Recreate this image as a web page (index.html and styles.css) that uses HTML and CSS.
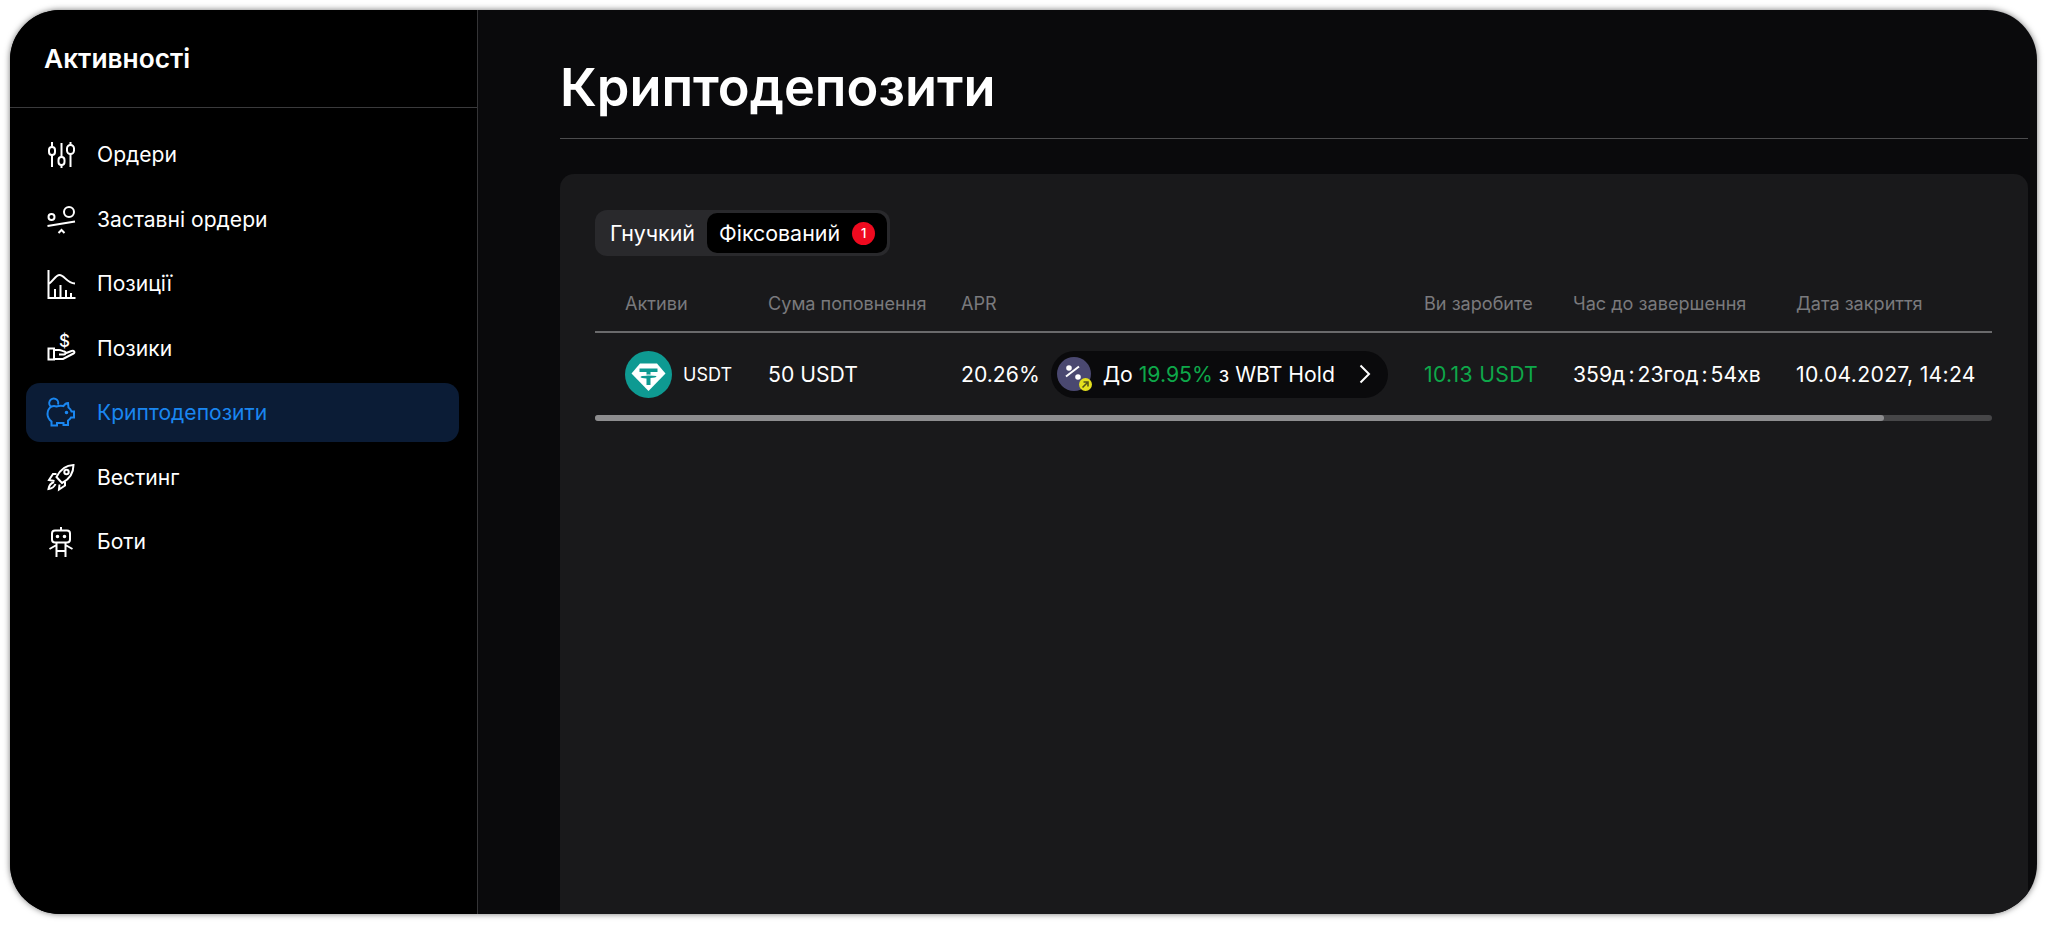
FILE: index.html
```html
<!DOCTYPE html>
<html lang="uk">
<head>
  <meta charset="UTF-8" />
  <meta name="viewport" content="width=device-width, initial-scale=1.0" />
  <title>Криптодепозити</title>
  <link rel="stylesheet" href="styles.css">
</head>
<body>
  <div class="window">
    <aside class="sidebar">
      <div class="sidebar-title">Активності</div>
      <nav class="nav">
        <a class="nav-item">
          <svg class="nav-icon" viewBox="0 0 30 30"><path d="M6 2v25M15.500 3v25M24.500 2v25"/><rect x="3" y="7" width="6" height="8" rx="3" class="mask"/><rect x="12.500" y="17" width="6" height="8" rx="3" class="mask"/><rect x="21" y="5" width="7" height="9" rx="3.500" class="mask"/></svg>
          Ордери
        </a>
        <a class="nav-item">
          <svg class="nav-icon" viewBox="0 0 30 30"><circle cx="5.500" cy="13" r="3"/><circle cx="23" cy="8" r="5"/><path d="M1.500 22 29 17.500M12.500 29l3-3 3 3"/></svg>
          Заставні ордери
        </a>
        <a class="nav-item">
          <svg class="nav-icon" viewBox="0 0 30 30"><path d="M2.500 1v28H29.500M2.500 15c4-2 7-9 11-9 5 0 7 8 15.500 8.500M9 29v-9M14.500 29V16M20 29v-8M25 29v-5"/></svg>
          Позиції
        </a>
        <a class="nav-item">
          <svg class="nav-icon" viewBox="0 0 30 30"><text x="18.500" y="14" class="icon-dollar">$</text><path d="M2.500 15.500H8v11H2.500zM8 17h5c2 0 3.500 1 5.500 1.500 1.500.5 1.500 3-.5 3h-5M19 20.500l6.500-2.500c2.500-1 4 1.500 2 2.500L17 26H8"/></svg>
          Позики
        </a>
        <a class="nav-item active">
          <svg class="nav-icon" viewBox="0 0 30 30"><path d="M5.500 9A4.500 4.500 0 1 1 12 6.500"/><path d="M10.500 8.500c2-.8 5-1 7-.5 1-1.500 3-3 4.500-3l.5 4.500c1.500 1 2.500 2.500 3 4h2.500v6H25c-.8 1.300-1.800 2.300-3 3v4.500h-4.500V25h-6.500v2.500H5.500v-4C3 21.500 1.500 19 1.500 16s1.500-6 4-7.500c1.500-.5 3.500-.5 5 0z"/><circle cx="20.500" cy="14.500" r=".8" class="dot"/></svg>
          Криптодепозити
        </a>
        <a class="nav-item">
          <svg class="nav-icon" viewBox="0 0 30 30"><path d="M27.500 3c-7 .2-13 4-17 12l5.500 6c7-3.500 11.500-10 11.500-18z"/><circle cx="20.500" cy="10" r="2.200"/><path d="M10.500 12H7L3 18l5.500 1M19 19.500v4l-6 4 .5-5M8 20c-3 1-5 4-5.500 7 3-.5 6-2.500 7-5"/></svg>
          Вестинг
        </a>
        <a class="nav-item">
          <svg class="nav-icon" viewBox="0 0 30 30"><rect x="6" y="3.500" width="18" height="12" rx="3"/><path d="M15 0v3.500M10.500 15.500V30M19.500 15.500V30M10.500 24h9M10.500 18 3.500 22M19.500 18 26.500 22"/><circle cx="11.500" cy="9.500" r=".8" class="dot"/><circle cx="18.500" cy="9.500" r=".8" class="dot"/></svg>
          Боти
        </a>
      </nav>
    </aside>

    <main class="main">
      <h1 class="page-title">Криптодепозити</h1>
      <section class="card">
        <div class="tabs">
          <div class="tab">Гнучкий</div>
          <div class="tab tab-active">Фіксований <span class="count">1</span></div>
        </div>

        <div class="table">
          <div class="row head">
            <div>Активи</div>
            <div>Сума поповнення</div>
            <div>APR</div>
            <div>Ви заробите</div>
            <div>Час до завершення</div>
            <div>Дата закриття</div>
          </div>
          <div class="row body-row">
            <div class="asset">
              <svg class="coin" viewBox="0 0 47 47">
                <circle cx="23.500" cy="23.500" r="23.500" fill="#0e9a92"/>
                <path d="M15 12.500h17l8.500 10L23.500 40 6.500 22.500z" fill="#fff"/>
                <path d="M14.500 17.500h18v3.500h-7v3c3.500.1 6 .7 6 1.500s-2.500 1.400-6 1.500V34h-4v-6.500c-3.500-.1-6-.7-6-1.500s2.500-1.400 6-1.500v-3.500h-7z" fill="#0e9a92"/>
                <path d="M13 25.500c2-1 6-1.500 10.500-1.500s8.500.5 10.500 1.500" fill="none" stroke="#fff" stroke-width="1.200"/>
              </svg>
              <span>USDT</span>
            </div>
            <div>50 USDT</div>
            <div class="apr">
              20.26%
              <div class="promo">
                <span class="promo-icon">
                  <svg viewBox="0 0 34 34" class="promo-percent"><circle cx="12" cy="11" r="1.800"/><circle cx="21" cy="20" r="1.800"/><path d="M22 9.500 9 19.500"/></svg>
                  <span class="promo-badge">
                    <svg viewBox="0 0 13 13" class="badge-arrow"><path d="M3.500 9.500 8.500 4.500M4.500 4h4.500v4.500"/></svg>
                  </span>
                </span>
                <span>До <span class="green">19.95%</span> з WBT Hold</span>
                <svg class="chevron" viewBox="0 0 12 20"><path d="M1.500 1.500 10 10l-8.500 8.500"/></svg>
              </div>
            </div>
            <div class="green wide">10.13 USDT</div>
            <div>359д<span class="sep">:</span>23год<span class="sep">:</span>54хв</div>
            <div class="wide">10.04.2027, 14:24</div>
          </div>
        </div>
        <div class="scrollbar"><div class="thumb"></div></div>
      </section>
    </main>
  </div>
</body>
</html>
```

FILE: styles.css
```css
* {
  box-sizing: border-box;
}
html, body {
  height: 100%;
}
body {
  margin: 0;
  padding: 10px 11px 11px 10px;
  background: #fff;
  font-family: Inter, "Noto Sans", sans-serif;
  color: #fff;
  overflow: hidden;
}
.window {
  display: flex;
  height: 100%;
  background: #0a0a0c;
  border-radius: 50px;
  overflow: hidden;
  box-shadow: 0 0 6px rgba(0, 0, 0, 0.55);
}
.sidebar {
  width: 468px;
  flex: none;
  background: #000;
  border-right: 1px solid #343436;
}
.sidebar-title {
  height: 98px;
  padding: 33px 0 0 34px;
  font-size: 26.3px;
  line-height: 32px;
  font-weight: 600;
  border-bottom: 1px solid #3a3a3c;
}
.nav {
  display: flex;
  flex-direction: column;
  gap: 5.5px;
  padding: 17px 18px 0 16px;
}
.nav-item {
  display: flex;
  align-items: center;
  gap: 21px;
  height: 59px;
  padding-left: 20px;
  border-radius: 14px;
  font-size: 21.1px;
  color: #fff;
}
.nav-item.active {
  background: #0b1c36;
  color: #1a86f0;
}
.nav-icon {
  width: 30px;
  height: 30px;
  flex: none;
  fill: none;
  stroke: currentColor;
  stroke-width: 2;
  overflow: visible;
}
.nav-icon .mask {
  fill: #000;
}
.nav-icon .dot {
  fill: currentColor;
}
.icon-dollar {
  font-size: 17px;
  font-weight: 500;
  fill: currentColor;
  stroke: none;
  text-anchor: middle;
}
.main {
  flex: 1;
  display: flex;
  flex-direction: column;
  min-width: 0;
  padding: 0 9px 0 82px;
}
.page-title {
  margin: 0;
  height: 129px;
  padding-top: 49px;
  font-size: 52.3px;
  line-height: 56px;
  font-weight: 600;
  border-bottom: 1px solid #4c4c4e;
}
.card {
  flex: 1;
  margin-top: 35px;
  padding: 36px 36px 0 35px;
  background: #19191b;
  border-radius: 14px 14px 0 0;
}
.tabs {
  display: inline-flex;
  align-items: center;
  height: 46px;
  padding: 3px;
  background: #29292c;
  border-radius: 12px;
  font-size: 21.4px;
}
.tab {
  display: flex;
  align-items: center;
  height: 40px;
  padding: 0 12px;
  border-radius: 10px;
}
.tab-active {
  gap: 12px;
  padding: 0 12px;
  background: #000;
}
.count {
  display: flex;
  align-items: center;
  justify-content: center;
  width: 23px;
  height: 23px;
  border-radius: 50%;
  background: #ef0a1f;
  font-size: 13px;
  font-weight: 500;
}
.row {
  display: grid;
  grid-template-columns: 143px 193px 463px 149px 223px 1fr;
  align-items: center;
  padding-left: 30px;
  white-space: nowrap;
}
.head {
  height: 77px;
  padding-top: 18px;
  font-size: 18.1px;
  color: #7a7a7d;
  border-bottom: 2px solid #6a6a6c;
}
.body-row {
  height: 82px;
  font-size: 21.2px;
}
.wide {
  letter-spacing: 0.3px;
}
.asset {
  display: flex;
  align-items: center;
  gap: 11px;
  font-size: 18px;
}
.coin {
  width: 47px;
  height: 47px;
  flex: none;
}
.apr {
  display: flex;
  align-items: center;
  gap: 11px;
}
.promo {
  display: flex;
  align-items: center;
  height: 47px;
  padding: 0 17px 0 6px;
  border-radius: 24px;
  background: #0a0a0c;
}
.promo-icon {
  position: relative;
  width: 34px;
  height: 34px;
  margin-right: 12px;
  border-radius: 50%;
  background: #4a4870;
}
.promo-percent {
  display: block;
  fill: #fff;
  stroke: #fff;
  stroke-width: 2;
}
.promo-badge {
  position: absolute;
  right: -1px;
  bottom: 0;
  width: 13px;
  height: 13px;
  border-radius: 50%;
  background: #e4e01e;
}
.badge-arrow {
  display: block;
  fill: none;
  stroke: #55551a;
  stroke-width: 1.6;
}
.chevron {
  width: 12px;
  height: 20px;
  margin-left: 24px;
  fill: none;
  stroke: #fff;
  stroke-width: 2;
}
.green {
  color: #0ea84a;
}
.sep {
  margin: 0 3px;
}
.scrollbar {
  height: 6px;
  background: #464648;
  border-radius: 3px;
}
.thumb {
  width: 1289px;
  height: 100%;
  background: #8d8d8f;
  border-radius: 3px;
}
```
